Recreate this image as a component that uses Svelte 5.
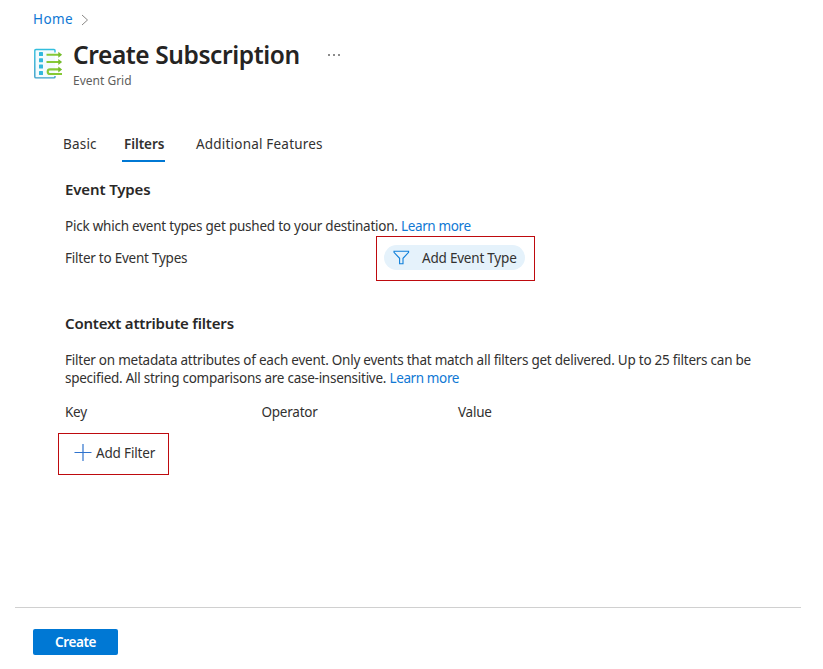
<script>
  const columns = ['Key', 'Operator', 'Value'];
</script>

<main>
  <nav class="crumbs">
    <a class="home" href="#home">Home</a>
    <svg width="8" height="12" viewBox="0 0 8 12"><path d="M1 1l5.5 5L1 11" fill="none" stroke="#8a8886" /></svg>
  </nav>

  <header>
    <svg class="logo" width="29" height="32" viewBox="0 0 29 32">
      <defs>
        <linearGradient id="edge" x1="0" y1="0" x2="0" y2="1">
          <stop offset="0" stop-color="#32bedd" />
          <stop offset="1" stop-color="#3a9fc8" />
        </linearGradient>
      </defs>
      <path d="M21 4.5V2.5q0-1-1-1H2q-1.2 0-1.2 1.2v26q0 1.2 1.2 1.2h18q1 0 1-1V28" fill="#f4fbfd" stroke="url(#edge)" stroke-width="1.4" />
      <g fill="#32b8dc">
        <rect x="5" y="4" width="4" height="4" rx=".5" />
        <rect x="5" y="10.3" width="4" height="4" rx=".5" />
        <rect x="5" y="16.6" width="4" height="4" rx=".5" />
        <rect x="5" y="23" width="4" height="4" rx=".5" />
      </g>
      <g fill="none" stroke="#86c936" stroke-width="2.1">
        <path d="M12.5 6.8h13M12.5 14h13M25 21.4H16a2.3 2.3 0 0 0 0 4.6H28" />
      </g>
      <path d="M24.3 3.8l3.8 3-3.8 3zM24.3 11l3.8 3-3.8 3zM24.3 18.4l3.8 3-3.8 3z" fill="#76bc2d" />
    </svg>
    <div>
      <h1>Create Subscription</h1>
      <p class="service">Event Grid</p>
    </div>
    <span class="more"><i></i><i></i><i></i></span>
  </header>

  <div class="tabs">
    <span class="basic">Basic</span>
    <span class="active">Filters</span>
    <span class="additional">Additional Features</span>
  </div>

  <section class="types">
    <h2 class="h-types">Event Types</h2>
    <p class="pick"><span>Pick which event types get pushed to your destination.</span> <a href="#types">Learn more</a></p>
    <div class="type-row">
      <span class="label">Filter to Event Types</span>
      <div class="mark">
        <button class="pill">
          <svg width="17" height="15" viewBox="0 0 17 15"><path d="M1 1.2h14.6v1.2L10 8.3v5.5H6.6V8.3L1 2.4z" fill="none" stroke="#0f7fda" stroke-width="1.1" /></svg>
          <span>Add Event Type</span>
        </button>
      </div>
    </div>
  </section>

  <section class="context">
    <h2 class="h-context">Context attribute filters</h2>
    <p class="line1">Filter on metadata attributes of each event. Only events that match all filters get delivered. Up to 25 filters can be</p>
    <p class="line2"><span>specified. All string comparisons are case-insensitive.</span> <a href="#filters">Learn more</a></p>
    <div class="columns">
      {#each columns as column}<span>{column}</span>{/each}
    </div>
    <div class="mark add">
      <svg width="18" height="18" viewBox="0 0 18 18"><path d="M.5 8.5h17M9 0v17" stroke="#2f73ce" stroke-width="1.2" /></svg>
      <span>Add Filter</span>
    </div>
  </section>

  <footer><button class="create">Create</button></footer>
</main>

<style>
  :global(body) { background: #fff; }
  main {
    box-sizing: border-box;
    width: 823px;
    height: 669px;
    overflow: hidden;
    display: flex;
    flex-direction: column;
    font: 13.5px/18px "Noto Sans", "Open Sans", sans-serif;
    letter-spacing: -0.24px;
    color: #323130;
    white-space: nowrap;
  }
  h1, h2, p { margin: 0; }
  a { color: #0f78d4; text-decoration: none; }
  button { border: 0; padding: 0; font: inherit; letter-spacing: inherit; color: inherit; }
  svg { display: block; flex: none; }
  .crumbs { display: flex; align-items: center; gap: 8px; padding: 9px 0 1px 33px; height: 20px; }
  .crumbs svg { margin-top: 1px; }
  .home { letter-spacing: 0.4px; }
  header { display: flex; padding: 11px 0 0 33px; height: 62px; }
  .logo { margin: 7px 10px 0 1px; }
  h1 { font-size: 24.5px; line-height: 28px; font-weight: 600; color: #252423; letter-spacing: -0.41px; width: 226px; }
  .service { font-size: 12px; line-height: 16px; margin-top: 4px; color: #605e5c; letter-spacing: 0; }
  .more { display: flex; gap: 3px; margin: 13px 0 0 29px; }
  .more i { width: 2px; height: 2px; background: #666; border-radius: 1px; }
  .tabs { display: flex; height: 28px; padding: 32px 0 0 63px; letter-spacing: 0.2px; }
  .tabs span { box-sizing: border-box; height: 27px; }
  .basic { width: 59px; }
  .tabs .active { width: 43px; padding-left: 2px; font-weight: 600; border-bottom: 2px solid #0078d4; letter-spacing: -0.07px; }
  .additional { margin-left: 31px; }
  .types { padding: 16px 0 0 65px; }
  h2 { font-size: 15px; line-height: 20px; font-weight: 600; color: #292827; letter-spacing: -0.13px; }
  .h-context { letter-spacing: -0.19px; }
  .pick { margin-top: 18px; }
  .pick a, .line2 a { letter-spacing: -0.38px; }
  .pick span { letter-spacing: -0.23px; }
  .line2 span { letter-spacing: -0.26px; }
  .type-row { display: flex; margin-top: 1px; }
  .label { width: 311px; padding-top: 13px; }
  .mark { box-sizing: border-box; border: 1px solid #be0a0e; }
  .type-row .mark { width: 159px; height: 45px; padding: 8px 0 0 7px; }
  .pill { display: flex; align-items: center; width: 141px; height: 25px; padding-left: 9px; gap: 12px; border-radius: 13px; background: #e5f2fb; letter-spacing: -0.21px; }
  .context { padding: 32px 0 0 65px; }
  .line1 { margin-top: 18px; }
  .columns { display: flex; margin-top: 16px; }
  .columns span { width: 196.5px; }
  .add { display: flex; align-items: center; gap: 4px; width: 111px; height: 42px; margin: 12px 0 0 -7px; padding: 0 0 2px 15px; letter-spacing: -0.16px; }
  footer { box-sizing: border-box; margin: auto 22px 0 15px; height: 62px; border-top: 1px solid #d0d0d0; padding: 21px 0 0 18px; }
  .create { display: block; width: 85px; height: 26px; border-radius: 2px; background: #0078d4; color: #fff; font-weight: 600; letter-spacing: -0.4px; }
</style>
